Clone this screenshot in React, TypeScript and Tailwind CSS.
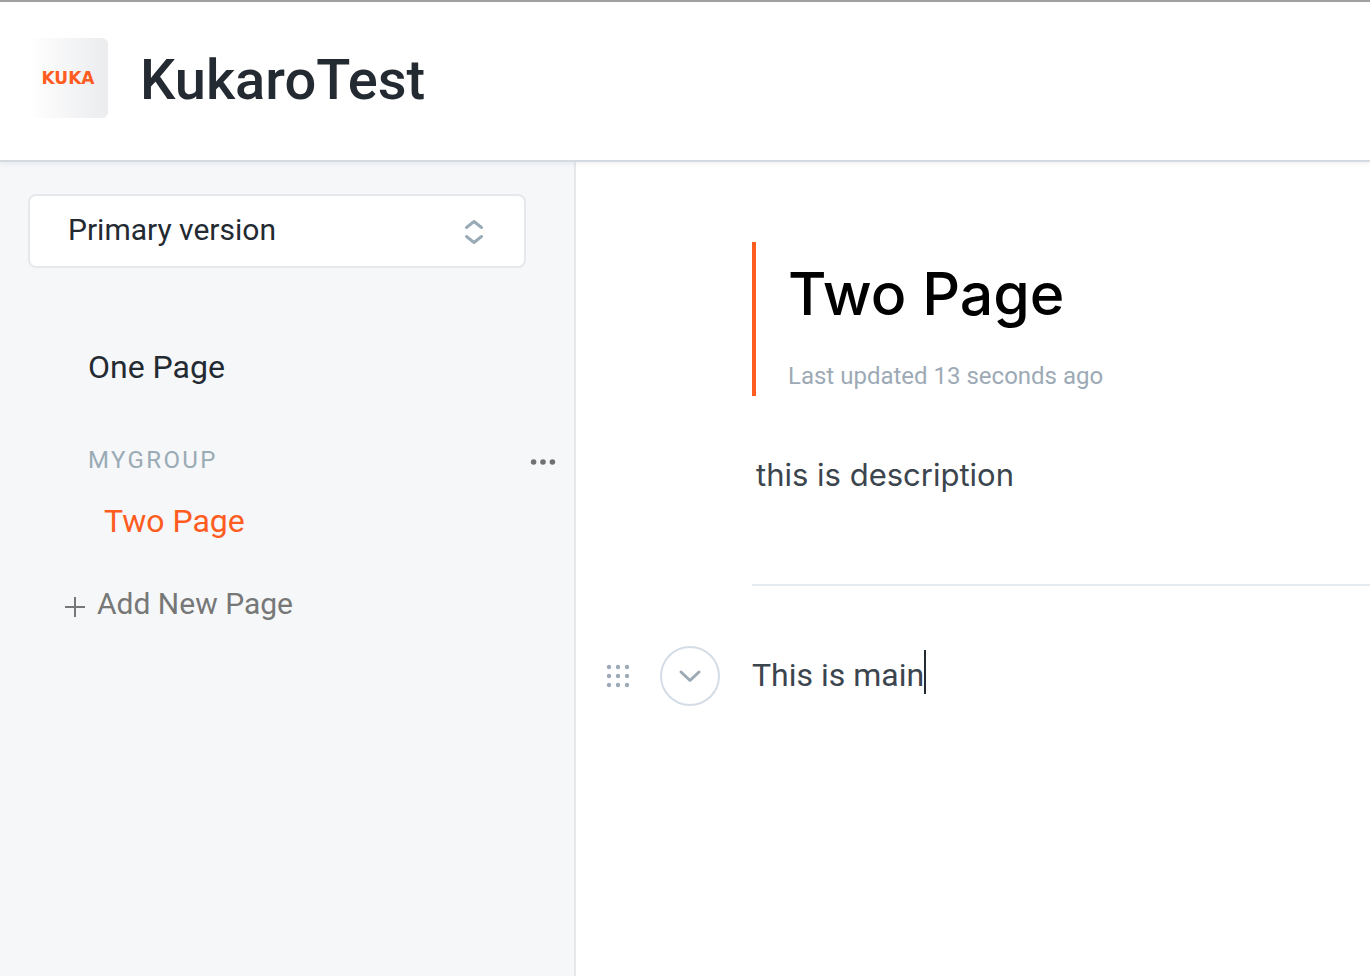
import React from "react";

function Header() {
  return (
    <header className="relative z-10 flex items-center gap-8 border-t-2 border-b-2 border-t-[#a0a0a0] border-b-[#d4dae1] bg-white px-7 pt-9 pb-[42px] shadow-[0_2px_4px_rgba(116,129,141,0.1)]">
      <a
        href="#home"
        aria-label="KUKA home"
        className="flex size-20 items-center justify-center rounded-md bg-linear-to-r from-white to-[#ebecee] font-['DejaVu_Sans',sans-serif] text-[17px] leading-5 font-bold text-[#ff5c1f]"
      >
        KUKA
      </a>
      <h1 className="pt-1 text-[56px] leading-[72px] font-medium text-[#242a31]">KukaroTest</h1>
    </header>
  );
}

function VersionSelect() {
  return (
    <div className="relative">
      <select
        aria-label="Version"
        className="block h-[74px] w-full appearance-none rounded-lg border-2 border-[#e6e8eb] bg-white pr-16 pb-1 pl-[38px] text-[30px] text-[#242a31]"
      >
        <option>Primary version</option>
      </select>
      <svg
        className="pointer-events-none absolute top-6 right-10 h-7 w-6"
        viewBox="0 0 24 28"
        fill="none"
        stroke="#9aabb5"
        strokeWidth="3"
        strokeLinecap="round"
        strokeLinejoin="round"
        aria-hidden="true"
      >
        <path d="M4.5 9.5L12 3.5L19.5 9.5M4.5 18.5L12 24.5L19.5 18.5" />
      </svg>
    </div>
  );
}

function Sidebar() {
  return (
    <aside className="w-[576px] shrink-0 border-r-2 border-[#e6e8eb] bg-[#f5f7f9] pt-8 pl-7">
      <div className="pr-12">
        <VersionSelect />
      </div>
      <nav className="mt-[79px] pr-[17px] pl-[60px] text-[32px] leading-10" aria-label="Pages">
        <a href="#one-page" className="block text-[#242a31]">
          One Page
        </a>
        <div className="mt-[57px] flex items-center justify-between">
          <h2 className="text-2xl leading-8 tracking-widest text-[#9aabb5]">MYGROUP</h2>
          <button type="button" aria-label="Group options" className="pt-1">
            <svg className="h-2 w-7" viewBox="0 0 28 8" fill="#6f7073" aria-hidden="true">
              <circle cx="4.6" cy="4" r="2.8" />
              <circle cx="14" cy="4" r="2.8" />
              <circle cx="23.4" cy="4" r="2.8" />
            </svg>
          </button>
        </div>
        <a href="#two-page" aria-current="page" className="mt-[25px] block pl-4 text-[#ff5c1f]">
          Two Page
        </a>
      </nav>
      <button type="button" className="mt-[43px] ml-9 flex items-center gap-3 text-[30px] leading-10 text-[#777777]">
        <svg
          className="mt-1 size-[21px]"
          viewBox="0 0 21 21"
          stroke="currentColor"
          strokeWidth="2"
          aria-hidden="true"
        >
          <path d="M11 1V21M1 11H21" />
        </svg>
        Add New Page
      </button>
    </aside>
  );
}

const dots = [3, 12, 21];

function Editor() {
  return (
    <div className="mt-[60px] flex items-center pl-[30px]">
      <button type="button" aria-label="Move block">
        <svg className="size-6" viewBox="0 0 24 24" fill="#9daab6" aria-hidden="true">
          {dots.map((y) => dots.map((x) => <circle key={`${x}-${y}`} cx={x} cy={y} r="2.2" />))}
        </svg>
      </button>
      <button
        type="button"
        aria-label="Block options"
        className="mr-8 ml-[30px] flex size-[60px] items-center justify-center rounded-full border-2 border-[#d4dde6]"
      >
        <svg
          className="h-4 w-6"
          viewBox="0 0 24 16"
          fill="none"
          stroke="#9daab6"
          strokeWidth="3"
          strokeLinecap="round"
          strokeLinejoin="round"
          aria-hidden="true"
        >
          <path d="M3 4L12 12.5L21 4" />
        </svg>
      </button>
      <div className="flex items-start pb-0.5 text-[32px] leading-[50px] text-[#3b454e]">
        <p>This is main</p>
        <span className="h-11 w-0.5 bg-[#242a31]" aria-hidden="true" />
      </div>
    </div>
  );
}

export default function App() {
  return (
    <div className="flex min-h-screen flex-col bg-white font-[Roboto,sans-serif]">
      <Header />
      <div className="flex grow">
        <Sidebar />
        <main className="min-w-0 grow pt-20">
          <div className="ml-44">
            <div className="border-l-4 border-[#ff5c1f] pt-4 pb-1 pl-8">
              <h2 className="font-[Inter,sans-serif] text-[59px] leading-[72px] font-medium text-black">Two Page</h2>
              <p className="mt-[30px] text-2xl leading-8 text-[#9daab6]">Last updated 13 seconds ago</p>
            </div>
            <p className="mt-[60px] pl-1 font-[Inter,sans-serif] text-[31px] leading-[38px] text-[#3b454e]">
              this is description
            </p>
            <hr className="mt-[90px] border-t-2 border-[#e6ecf1]" />
          </div>
          <Editor />
        </main>
      </div>
    </div>
  );
}
